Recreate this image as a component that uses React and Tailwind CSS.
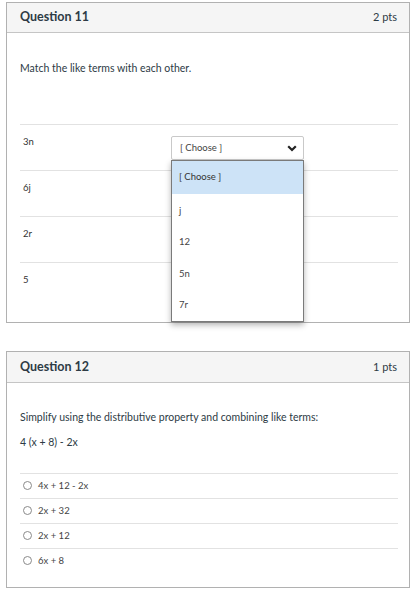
import React from "react";

const font = { fontFamily: "Lato, 'Noto Sans', sans-serif" };

function Chevron() {
  return (
    <svg width="10" height="7" viewBox="0 0 10 7" className="block">
      <path d="M1.2 1.2 L5 5 L8.8 1.2" fill="none" stroke="#222" strokeWidth="2.2" />
    </svg>
  );
}

function Select({ children, covered }) {
  return (
    <div className="relative w-[133px] h-[24px] border border-[#c9c9c9] rounded-[2px] bg-white flex items-center justify-between pl-[8px] pr-[6px] text-[9.5px] text-[#444]">
      {covered ? null : (
        <>
          <span>[ Choose ]</span>
          <Chevron />
        </>
      )}
      {children}
    </div>
  );
}

function MatchRow({ label, last, covered, children }) {
  return (
    <div className={`border-t border-[#e2e2e2] flex ${last ? "h-[60px]" : "h-[46px]"}`}>
      <div className="w-[151px] pl-[3px] pt-[10px] text-[9.5px] text-[#333]">{label}</div>
      <div className="pt-[11px]">
        <Select covered={covered}>{children}</Select>
      </div>
    </div>
  );
}

function Dropdown() {
  const opts = ["j", "12", "5n", "7r"];
  return (
    <div className="absolute left-[-1px] top-[23px] w-[133px] h-[162px] bg-white border border-[#7a7a7a] shadow-[0_3px_6px_rgba(0,0,0,0.3)] z-10 text-[9.5px] text-[#444]">
      <div className="h-[33px] bg-[#cde3f7] flex items-center pl-[7px] text-[#333]">[ Choose ]</div>
      {opts.map((o) => (
        <div key={o} className="h-[31.5px] flex items-center pl-[7px] pt-[2px]">{o}</div>
      ))}
    </div>
  );
}

function Radio({ label }) {
  return (
    <div className="border-t border-[#e2e2e2] h-[25px] flex items-center pl-[3px] text-[9.5px] text-[#444]">
      <span className="w-[9px] h-[9px] rounded-full border border-[#8a8a8a] mr-[6px]" />
      <span>{label}</span>
    </div>
  );
}

export default function App() {
  return (
    <div className="w-[413px] h-[599px] bg-white overflow-hidden" style={font}>
      <div className="pt-[2px] px-[6px]">
        <div className="w-[404px] border border-[#b1b1b1]">
          <div className="h-[30px] bg-[#f5f5f5] border-b border-[#c5c5c5] flex items-center justify-between pl-[13px] pr-[12px]">
            <span className="text-[12.5px] font-bold text-[#2d3b45]">Question 11</span>
            <span className="text-[11px] text-[#2d3b45]">2 pts</span>
          </div>
          <div className="pl-[13px] pr-[11px]">
            <div className="h-[91px] pt-[28px] text-[10.5px] text-[#2d3b45]">Match the like terms with each other.</div>
            <MatchRow label="3n"><Dropdown /></MatchRow>
            <MatchRow label="6j" covered />
            <MatchRow label="2r" covered />
            <MatchRow label="5" last covered />
          </div>
        </div>

        <div className="mt-[28px] w-[404px] border border-[#b1b1b1]">
          <div className="h-[31px] bg-[#f5f5f5] border-b border-[#c5c5c5] flex items-center justify-between pl-[13px] pr-[12px]">
            <span className="text-[12.5px] font-bold text-[#2d3b45]">Question 12</span>
            <span className="text-[11px] text-[#2d3b45]">1 pts</span>
          </div>
          <div className="pl-[13px] pr-[11px]">
            <div className="pt-[27px] text-[10.5px] text-[#2d3b45]">
              Simplify using the distributive property and combining like terms:
            </div>
            <div className="pt-[9px] h-[47px] text-[10.5px] text-[#2d3b45]">4 (x + 8) - 2x</div>
            <Radio label="4x + 12 - 2x" />
            <Radio label="2x + 32" />
            <Radio label="2x + 12" />
            <Radio label="6x + 8" />
            <div className="h-[14px]" />
          </div>
        </div>
      </div>
    </div>
  );
}
